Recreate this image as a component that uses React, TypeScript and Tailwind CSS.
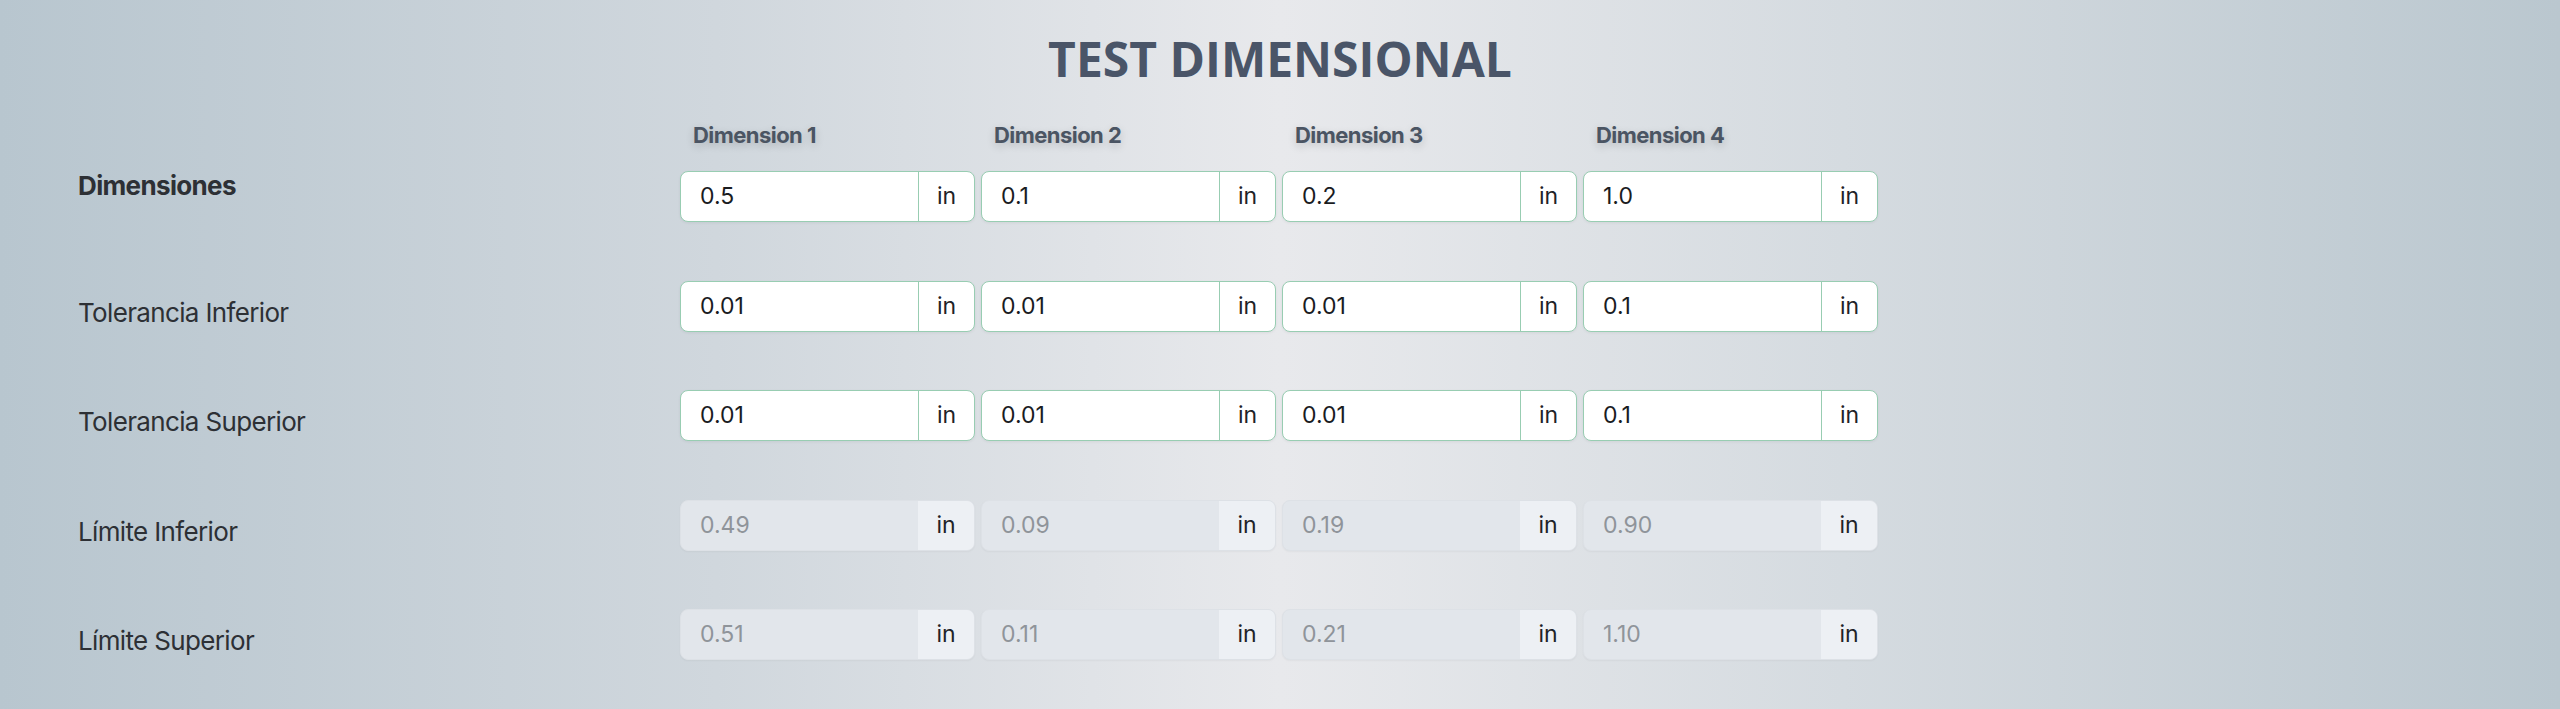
import { useState } from 'react';

type Row = {
  label: string;
  values: string[];
  readOnly?: boolean;
  bold?: boolean;
};

const rows: Row[] = [
  { label: 'Dimensiones', values: ['0.5', '0.1', '0.2', '1.0'], bold: true },
  { label: 'Tolerancia Inferior', values: ['0.01', '0.01', '0.01', '0.1'] },
  { label: 'Tolerancia Superior', values: ['0.01', '0.01', '0.01', '0.1'] },
  { label: 'Límite Inferior', values: ['0.49', '0.09', '0.19', '0.90'], readOnly: true },
  { label: 'Límite Superior', values: ['0.51', '0.11', '0.21', '1.10'], readOnly: true },
];

function UnitInput({ value, readOnly }: { value: string; readOnly?: boolean }) {
  const [val, setVal] = useState(value);

  if (readOnly) {
    return (
      <div className="flex h-[51px] w-[295px] overflow-hidden rounded-lg border border-[#dde1e6] bg-[#e2e6eb] shadow-[0_1px_2px_rgba(0,0,0,0.04)]">
        <input
          readOnly
          value={val}
          className="min-w-0 flex-1 bg-transparent pl-[19px] text-[23px] text-[#8f949a] outline-none"
        />
        <span className="flex w-[56px] items-center justify-center bg-[#edf0f4] text-[23px] text-[#1f2328]">in</span>
      </div>
    );
  }

  return (
    <div className="flex h-[51px] w-[295px] overflow-hidden rounded-lg border border-[#98cdb2] bg-white shadow-[0_1px_3px_rgba(0,0,0,0.06)]">
      <input
        value={val}
        onChange={(e) => setVal(e.target.value)}
        className="min-w-0 flex-1 bg-transparent pl-[19px] text-[23px] text-[#1a1c1f] outline-none"
      />
      <span className="flex w-[56px] items-center justify-center border-l border-[#98cdb2] text-[23px] text-[#1f2328]">in</span>
    </div>
  );
}

export default function App() {
  return (
    <div className="h-[709px] w-full overflow-hidden bg-[linear-gradient(90deg,#b8c6cf_0%,#d0d7dd_28%,#e8e9ec_50%,#d5dbe0_72%,#bac7cf_100%)] pt-[35px] font-['Inter',sans-serif]">
      <h1 className="text-center font-['Open_Sans',sans-serif] text-[48px] font-bold leading-[48px] text-[#4a5568]">
        TEST DIMENSIONAL
      </h1>

      <div className="mt-[38px] flex flex-col gap-[58.5px] pl-[78px]">
        {rows.map((row, i) => (
          <div key={row.label} className="flex items-start">
            <div
              className={
                i === 0
                  ? 'w-[602px] pt-[49px] text-[26px] font-bold leading-[32px] tracking-tight text-[#2d3035]'
                  : 'w-[602px] pt-[16px] text-[26px] leading-[32px] tracking-tight text-[#2d3035]'
              }
            >
              {row.label}
            </div>
            <div className="grid grid-cols-[repeat(4,295px)] gap-x-[6px]">
              {row.values.map((v, j) => (
                <div key={j} className="flex flex-col">
                  {i === 0 && (
                    <div className="mb-[22px] pl-[13px] text-[22px] font-bold leading-[28px] tracking-tight text-[#4b5563] [text-shadow:0_3px_8px_rgba(0,0,0,0.18)]">
                      Dimension {j + 1}
                    </div>
                  )}
                  <UnitInput value={v} readOnly={row.readOnly} />
                </div>
              ))}
            </div>
          </div>
        ))}
      </div>
    </div>
  );
}
